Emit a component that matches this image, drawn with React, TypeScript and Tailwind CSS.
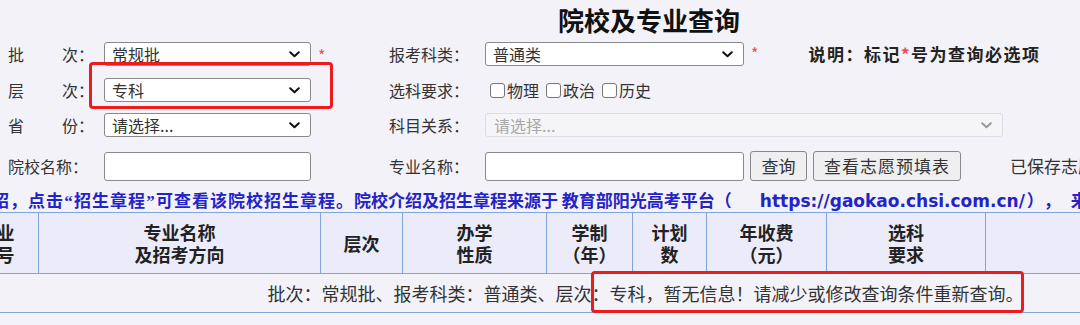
import React from "react";

const Chevron = ({ color = "#111" }: { color?: string }) => (
  <svg width="11" height="7" viewBox="0 0 11 7" className="shrink-0">
    <path d="M1.2 1.2 L5.5 5.3 L9.8 1.2" fill="none" stroke={color} strokeWidth="2" strokeLinecap="round" strokeLinejoin="round" />
  </svg>
);

const Select = ({ value, w, disabled = false }: { value: string; w: string; disabled?: boolean }) => (
  <div
    className={
      disabled
        ? `${w} shrink-0 h-[24px] flex items-center justify-between pl-[8px] pr-[10px] rounded-[3px] border border-[#dedee2] bg-[#f5f5f8] text-[#a8a8a8]`
        : `${w} shrink-0 h-[24px] flex items-center justify-between pl-[7px] pr-[10px] rounded-[3px] border border-[#8a8a8a] bg-white text-[#333]`
    }
  >
    <span className="text-[16px] leading-none">{value}</span>
    <Chevron color={disabled ? "#9a9a9a" : "#111"} />
  </div>
);

const Label2 = ({ a, b }: { a: string; b: string }) => (
  <div className="w-[96px] shrink-0 flex text-[16px] text-[#333]">
    <span className="w-[54px] shrink-0">{a}</span>
    <span>{b}</span>
  </div>
);

const Label = ({ t }: { t: string }) => (
  <div className="w-[96px] shrink-0 text-[16px] text-[#333] whitespace-nowrap">{t}</div>
);

const Star = () => (
  <span className="shrink-0 text-[#f24b4b] text-[16px] leading-none self-start mt-[5px] ml-[7px]">*</span>
);

const Check = ({ t }: { t: string }) => (
  <div className="shrink-0 flex items-center mr-[7px]">
    <div className="w-[15px] h-[15px] rounded-[3px] border border-[#767676] bg-white mr-[2px]" />
    <span className="text-[16px] text-[#333]">{t}</span>
  </div>
);

const Q = ({ c }: { c: string }) => (
  <span className="inline-block w-[10px] text-center" style={{ fontFamily: '"Liberation Serif", serif' }}>
    {c}
  </span>
);

export default function App() {
  const cols = [84, 282, 82, 144, 86, 74, 120, 159, 351];
  const heads: React.ReactNode[] = [
    <>专业<br />代号</>,
    <>专业名称<br />及招考方向</>,
    <>层次</>,
    <>办学<br />性质</>,
    <>学制<br />（年）</>,
    <>计划<br />数</>,
    <>年收费<br />（元）</>,
    <>选科<br />要求</>,
    <></>,
  ];
  return (
    <div
      className="relative w-[1080px] h-[325px] overflow-hidden bg-[#f3f2f8] [text-spacing-trim:space-all]"
      style={{ fontFamily: '"Noto Sans CJK SC", "Noto Sans", sans-serif' }}
    >
      {/* title */}
      <div className="h-[40px] pl-[558px] pt-[3px] text-[26px] leading-[34px] font-bold text-[#111] whitespace-nowrap">
        院校及专业查询
      </div>

      {/* row 1 */}
      <div className="h-[28px] flex items-center">
        <div className="w-[389px] shrink-0 flex items-center pl-[8px]">
          <Label2 a="批" b="次：" />
          <Select value="常规批" w="w-[207px]" />
          <Star />
        </div>
        <Label t="报考科类：" />
        <Select value="普通类" w="w-[259px]" />
        <Star />
        <div className="shrink-0 ml-[50px] text-[17px] font-bold text-[#222] tracking-[1.5px] whitespace-nowrap">
          说明：标记<span className="text-[#f24b4b]">*</span>号为查询必选项
        </div>
      </div>

      {/* row 2 */}
      <div className="mt-[8px] h-[28px] flex items-center">
        <div className="w-[389px] shrink-0 flex items-center pl-[8px]">
          <Label2 a="层" b="次：" />
          <Select value="专科" w="w-[207px]" />
        </div>
        <Label t="选科要求：" />
        <div className="shrink-0 flex items-center ml-[5px]">
          <Check t="物理" />
          <Check t="政治" />
          <Check t="历史" />
        </div>
      </div>

      {/* row 3 */}
      <div className="mt-[7px] h-[28px] flex items-center">
        <div className="w-[389px] shrink-0 flex items-center pl-[8px]">
          <Label2 a="省" b="份：" />
          <Select value="请选择..." w="w-[207px]" />
        </div>
        <Label t="科目关系：" />
        <Select value="请选择..." w="w-[518px]" disabled />
      </div>

      {/* row 4 */}
      <div className="mt-[11px] h-[32px] flex items-center">
        <div className="w-[389px] shrink-0 flex items-center pl-[8px]">
          <Label t="院校名称：" />
          <div className="w-[207px] shrink-0 h-[29px] rounded-[3px] border border-[#8a8a8a] bg-white" />
        </div>
        <Label t="专业名称：" />
        <div className="w-[259px] shrink-0 h-[29px] rounded-[3px] border border-[#8a8a8a] bg-white" />
        <div className="shrink-0 ml-[6px] w-[57px] h-[30px] flex items-center justify-center rounded-[3px] border border-[#8a8a8a] bg-[#efefef] text-[17px] text-[#333]">
          查询
        </div>
        <div className="shrink-0 ml-[6px] w-[148px] h-[30px] flex items-center justify-center rounded-[3px] border border-[#8a8a8a] bg-[#efefef] text-[17px] tracking-[1px] text-[#333] whitespace-nowrap">
          查看志愿预填表
        </div>
        <div className="shrink-0 ml-[49px] text-[17px] text-[#333] whitespace-nowrap">已保存志愿</div>
      </div>

      {/* blue notice */}
      <div className="mt-[6px] h-[24px]">
        <div className="ml-[-8px] whitespace-nowrap text-[17px] leading-[24px] font-bold text-[#2323c8]">
          <span className="tracking-[1px]">
            绍，点击<Q c="“" />招生章程<Q c="”" />可查看该院校招生章程。
          </span>
          <span>院校介绍及招生章程来源于 教育部阳光高考平台（</span>
          <span className="ml-[28px]" style={{ fontFamily: '"DejaVu Sans", sans-serif' }}>
            https://gaokao.chsi.com.cn/
          </span>
          <span className="ml-[2px]">），</span>
          <span className="ml-[10px]">来源</span>
        </div>
      </div>

      {/* table */}
      <table className="ml-[-46px] border-collapse table-fixed w-[1382px]">
        <colgroup>
          {cols.map((c, i) => (
            <col key={i} style={{ width: c }} />
          ))}
        </colgroup>
        <thead>
          <tr className="h-[61px] bg-[#ebebf9]">
            {heads.map((h, i) => (
              <th
                key={i}
                className="border border-[#80a5da] text-center align-middle text-[18px] leading-[22px] font-bold text-[#222] p-0"
              >
                {h}
              </th>
            ))}
          </tr>
        </thead>
        <tbody>
          <tr className="h-[39px]">
            <td colSpan={9} className="border border-[#80a5da] text-center text-[18px] text-[#333] whitespace-nowrap p-0">
              批次：常规批、报考科类：普通类、层次：专科，暂无信息！请减少或修改查询条件重新查询。
            </td>
          </tr>
        </tbody>
      </table>

      {/* red annotation boxes */}
      <div className="absolute left-[89px] top-[62px] w-[244px] h-[47px] border-[3px] border-[#ec1c1c] rounded-[4px]" />
      <div className="absolute left-[591px] top-[271px] w-[433px] h-[42px] border-[3px] border-[#ec1c1c] rounded-[4px]" />
    </div>
  );
}
